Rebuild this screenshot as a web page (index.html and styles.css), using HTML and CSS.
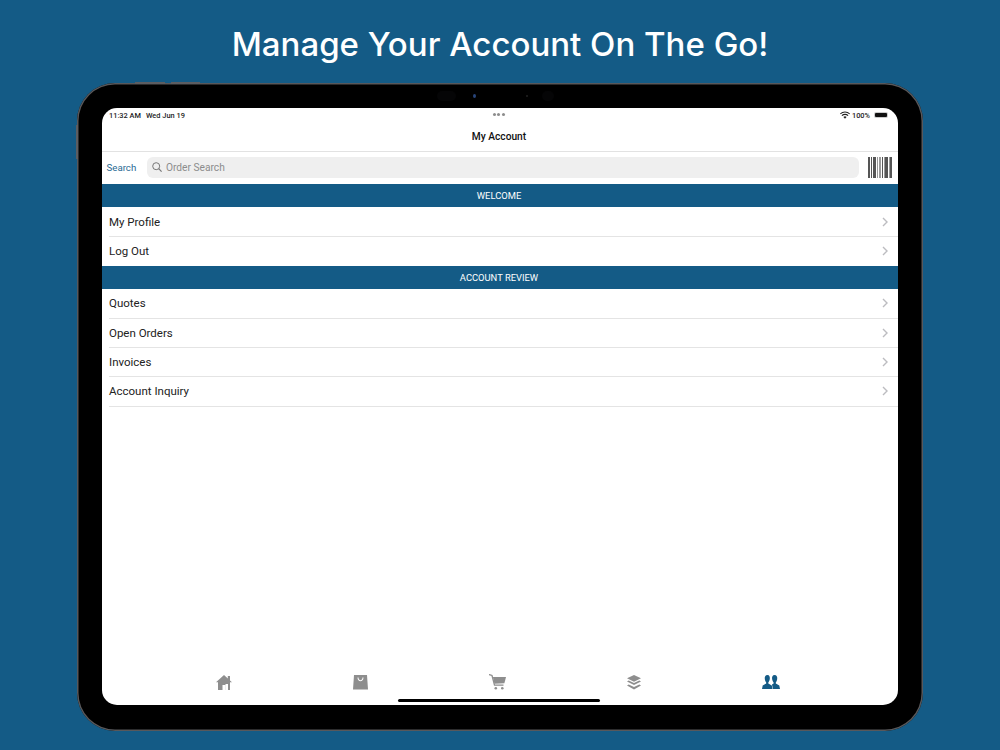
FILE: index.html
```html
<!DOCTYPE html>
<html lang="en">
<head>
<meta charset="utf-8">
<title>My Account</title>
<link rel="stylesheet" href="styles.css">
</head>
<body>
<h1 class="headline">Manage Your Account On The Go!</h1>
<div class="device">
  <span class="hw-btn hw-top-a"></span>
  <span class="hw-btn hw-top-b"></span>
  <span class="hw-btn hw-side"></span>
  <div class="sensors"><span class="oval-a"></span><span class="lens"></span><span class="dot"></span><span class="oval-b"></span></div>
  <div class="screen">
    <div class="status">
      <div class="status-left"><span>11:32 AM</span><span>Wed Jun 19</span></div>
      <div class="status-right">
        <svg class="wifi" width="10" height="8" viewBox="0 0 20 15"><path d="M10 15l-3.200-3.600a4.600 4.600 0 0 1 6.400 0zM10 7.600a7.600 7.600 0 0 0-5.300 2.100L3 7.800a10.200 10.200 0 0 1 14 0l-1.700 1.900A7.600 7.600 0 0 0 10 7.600zM10 2.600A12.800 12.800 0 0 0 1.300 6L0 4.300A15 15 0 0 1 20 4.300L18.700 6A12.800 12.800 0 0 0 10 2.600z" fill="#222"/></svg>
        <span>100%</span>
        <span class="battery"><span class="battery-fill"></span></span>
      </div>
      <span class="multitask"><i></i><i></i><i></i></span>
    </div>
    <div class="navbar">My Account</div>
    <div class="searchbar">
      <span class="search-link">Search</span>
      <div class="search-field">
        <svg width="10" height="10" viewBox="0 0 10 10"><circle cx="4.200" cy="4.200" r="3.500" fill="none" stroke="#777" stroke-width="1"/><path d="M6.700 6.700L9.600 9.600" stroke="#777" stroke-width="1.200"/></svg>
        <span>Order Search</span>
      </div>
      <div class="barcode"><i class="b3"></i><i class="b1"></i><i class="b4"></i><i class="b1 lt"></i><i class="b2 lt"></i><i class="b1"></i><i class="b1 lt"></i><i class="b3"></i><i class="b1 lt"></i><i class="b2"></i></div>
    </div>
    <div class="section">WELCOME</div>
    <div class="row"><span>My Profile</span><svg class="chev" width="6" height="10" viewBox="0 0 6 10"><path d="M1 1l4 4-4 4" fill="none" stroke="#bcbcc0" stroke-width="1.400"/></svg></div>
    <div class="row last"><span>Log Out</span><svg class="chev" width="6" height="10" viewBox="0 0 6 10"><path d="M1 1l4 4-4 4" fill="none" stroke="#bcbcc0" stroke-width="1.400"/></svg></div>
    <div class="section">ACCOUNT REVIEW</div>
    <div class="row"><span>Quotes</span><svg class="chev" width="6" height="10" viewBox="0 0 6 10"><path d="M1 1l4 4-4 4" fill="none" stroke="#bcbcc0" stroke-width="1.400"/></svg></div>
    <div class="row"><span>Open Orders</span><svg class="chev" width="6" height="10" viewBox="0 0 6 10"><path d="M1 1l4 4-4 4" fill="none" stroke="#bcbcc0" stroke-width="1.400"/></svg></div>
    <div class="row"><span>Invoices</span><svg class="chev" width="6" height="10" viewBox="0 0 6 10"><path d="M1 1l4 4-4 4" fill="none" stroke="#bcbcc0" stroke-width="1.400"/></svg></div>
    <div class="row"><span>Account Inquiry</span><svg class="chev" width="6" height="10" viewBox="0 0 6 10"><path d="M1 1l4 4-4 4" fill="none" stroke="#bcbcc0" stroke-width="1.400"/></svg></div>
    <div class="spacer"></div>
    <div class="tabbar">
      <svg width="16" height="15" viewBox="0 0 16 15"><path d="M8 0L0 7.200h2V15h4.500v-5h3.200v5H14V7.200h2l-2-1.800V1h-2.200v2.400z" fill="#8e8e8e"/><rect x="9.500" y="9" width="2.500" height="6" fill="#fff"/></svg>
      <svg width="15" height="15" viewBox="0 0 15 15"><path d="M1 0h13l1 14.500H0zM4.500 2.600c0 5 6 5 6 0h-1c0 3.500-4 3.500-4 0z" fill="#8e8e8e" fill-rule="evenodd"/></svg>
      <svg width="17" height="16" viewBox="0 0 17 16"><path d="M0 .5L3 1.500 5.500 11.200H14.500" fill="none" stroke="#8e8e8e" stroke-width="1.300"/><path d="M3.900 3H17L15.400 9.200 5.400 9.800z" fill="#8e8e8e"/><circle cx="6.800" cy="14.300" r="1.300" fill="#8e8e8e"/><circle cx="13.300" cy="14.300" r="1.300" fill="#8e8e8e"/></svg>
      <svg width="14" height="15" viewBox="0 0 14 15"><path d="M7 0l7 3.300-7 3.500-7-3.500z" fill="#8e8e8e"/><path d="M1.700 5.400L7 8.100l5.300-2.700L14 6.500l-7 3.500-7-3.500z" fill="#8e8e8e"/><path d="M1.700 9.400L7 12l5.300-2.600 1.700 1-7 4-7-4z" fill="#8e8e8e"/></svg>
      <svg width="18" height="14" viewBox="0 0 18 14"><path d="M5.500 0C3.300 0 2.500 1.800 2.800 4c.2 1.400.7 2.700 1.400 3.400v1.200L.7 10.500 0 14h10.500l-.7-3.500-3.500-1.900V7.400C7 6.700 7.500 5.400 7.800 4 8.100 1.800 7.400 0 5.500 0z" fill="#145b86"/><path d="M12.500 0c-1.900 0-2.700 1.800-2.400 4 .3 1.400.8 2.700 1.500 3.400v1.200l-1.600.9.900 4.500H18l-.7-3.500-3.500-1.900V7.400c.7-.7 1.200-2 1.400-3.400C15.500 1.800 14.700 0 12.500 0z" fill="#145b86"/></svg>
    </div>
    <span class="home-indicator"></span>
  </div>
</div>
</body>
</html>
```
FILE: styles.css
```css
* { box-sizing: border-box; }
html, body { margin: 0; height: 100%; }
body {
  width: 1000px;
  height: 750px;
  overflow: hidden;
  background: #145b86;
  font-family: Roboto, "Liberation Sans", sans-serif;
  display: flex;
  flex-direction: column;
  align-items: center;
}
.headline {
  margin: 0;
  height: 83px;
  padding-top: 22px;
  font-family: Inter, "Liberation Sans", sans-serif;
  font-size: 33px;
  line-height: 44px;
  font-weight: 500;
  color: #fff;
}
.device {
  position: relative;
  width: 846px;
  height: 648px;
  padding: 25px;
  background: #000;
  border-radius: 38px;
  box-shadow: inset 0 0 0 1.5px #58585b;
}
.hw-btn { position: absolute; background: #5c5d61; }
.hw-top-a { top: -1px; left: 58px; width: 30px; height: 2px; }
.hw-top-b { top: -1px; left: 94px; width: 29px; height: 2px; }
.hw-side { top: 42px; left: -1px; width: 2px; height: 34px; }
.sensors {
  position: absolute;
  top: 0;
  left: 0;
  right: 0;
  height: 25px;
  padding-right: 9px;
  display: flex;
  justify-content: center;
  align-items: center;
}
.oval-a { width: 19px; height: 10px; margin-right: 17px; border-radius: 5px; background: #050506; }
.lens { width: 3px; height: 4px; margin-right: 50px; border-radius: 50%; background: #28457a; }
.dot { width: 2px; height: 2px; margin-right: 14px; border-radius: 50%; background: #222; }
.oval-b { width: 12px; height: 10px; border-radius: 5px; background: #050506; }
.screen {
  position: relative;
  width: 796px;
  height: 597px;
  background: #fff;
  border-radius: 15px;
  overflow: hidden;
  display: flex;
  flex-direction: column;
}
.status {
  position: relative;
  height: 14px;
  flex: none;
  padding: 0 10px 0 7px;
  display: flex;
  justify-content: space-between;
  align-items: center;
  font-size: 7.4px;
  font-weight: 500;
  color: #222;
}
.status-left { display: flex; gap: 5px; }
.status-right { display: flex; align-items: center; gap: 2px; }
.battery {
  width: 14px;
  height: 6px;
  margin-left: 2px;
  padding: 1px;
  border-radius: 2px;
  background: #ccc;
  display: flex;
}
.battery-fill { flex: 1; background: #111; border-radius: 1px; }
.multitask {
  position: absolute;
  top: 5px;
  left: 390.5px;
  display: flex;
  gap: 1.5px;
}
.multitask i { width: 3px; height: 3px; border-radius: 50%; background: #8d8d8d; }
.navbar {
  height: 30px;
  flex: none;
  padding: 0 2px 1px 0;
  display: flex;
  align-items: center;
  justify-content: center;
  font-size: 10.2px;
  font-weight: 500;
  color: #111;
  border-bottom: 1px solid #e2e2e2;
}
.searchbar {
  height: 32px;
  flex: none;
  padding: 0 5px 2px 4.5px;
  display: flex;
  align-items: center;
}
.search-link { width: 40.5px; font-size: 9.7px; color: #2a6a94; }
.search-field {
  width: 712px;
  height: 21px;
  border-radius: 6px;
  background: #efefef;
  padding-left: 5px;
  display: flex;
  align-items: center;
  gap: 4px;
  font-size: 10.2px;
  color: #8c8c8c;
}
.barcode {
  width: 24px;
  height: 21px;
  margin-left: 9px;
  display: flex;
  gap: 1px;
}
.barcode i { background: #555; }
.barcode i.lt { background: #999; }
.b1 { width: 1px; }
.b2 { width: 2px; }
.b3 { width: 3px; }
.b4 { width: 4px; }
.section {
  height: 23px;
  flex: none;
  padding-right: 2px;
  display: flex;
  align-items: center;
  justify-content: center;
  background: #145b86;
  color: #fff;
  font-size: 9.4px;
  font-weight: 400;
}
.row {
  height: 30.3px;
  margin-bottom: -1px;
  flex: none;
  margin-left: 7px;
  padding: 0 10px 0 0;
  display: flex;
  align-items: center;
  justify-content: space-between;
  font-size: 11.5px;
  color: #222;
  border-bottom: 1px solid #e4e4e4;
}
.row.last { height: 29.3px; margin-bottom: 0; border-bottom: 0; }
.spacer { flex: 1; }
.tabbar {
  height: 46px;
  flex: none;
  padding: 0 118px 0 114px;
  display: flex;
  justify-content: space-between;
  align-items: center;
}
.home-indicator {
  position: absolute;
  left: 296px;
  bottom: 3px;
  width: 202px;
  height: 3px;
  border-radius: 2px;
  background: #000;
}
```
